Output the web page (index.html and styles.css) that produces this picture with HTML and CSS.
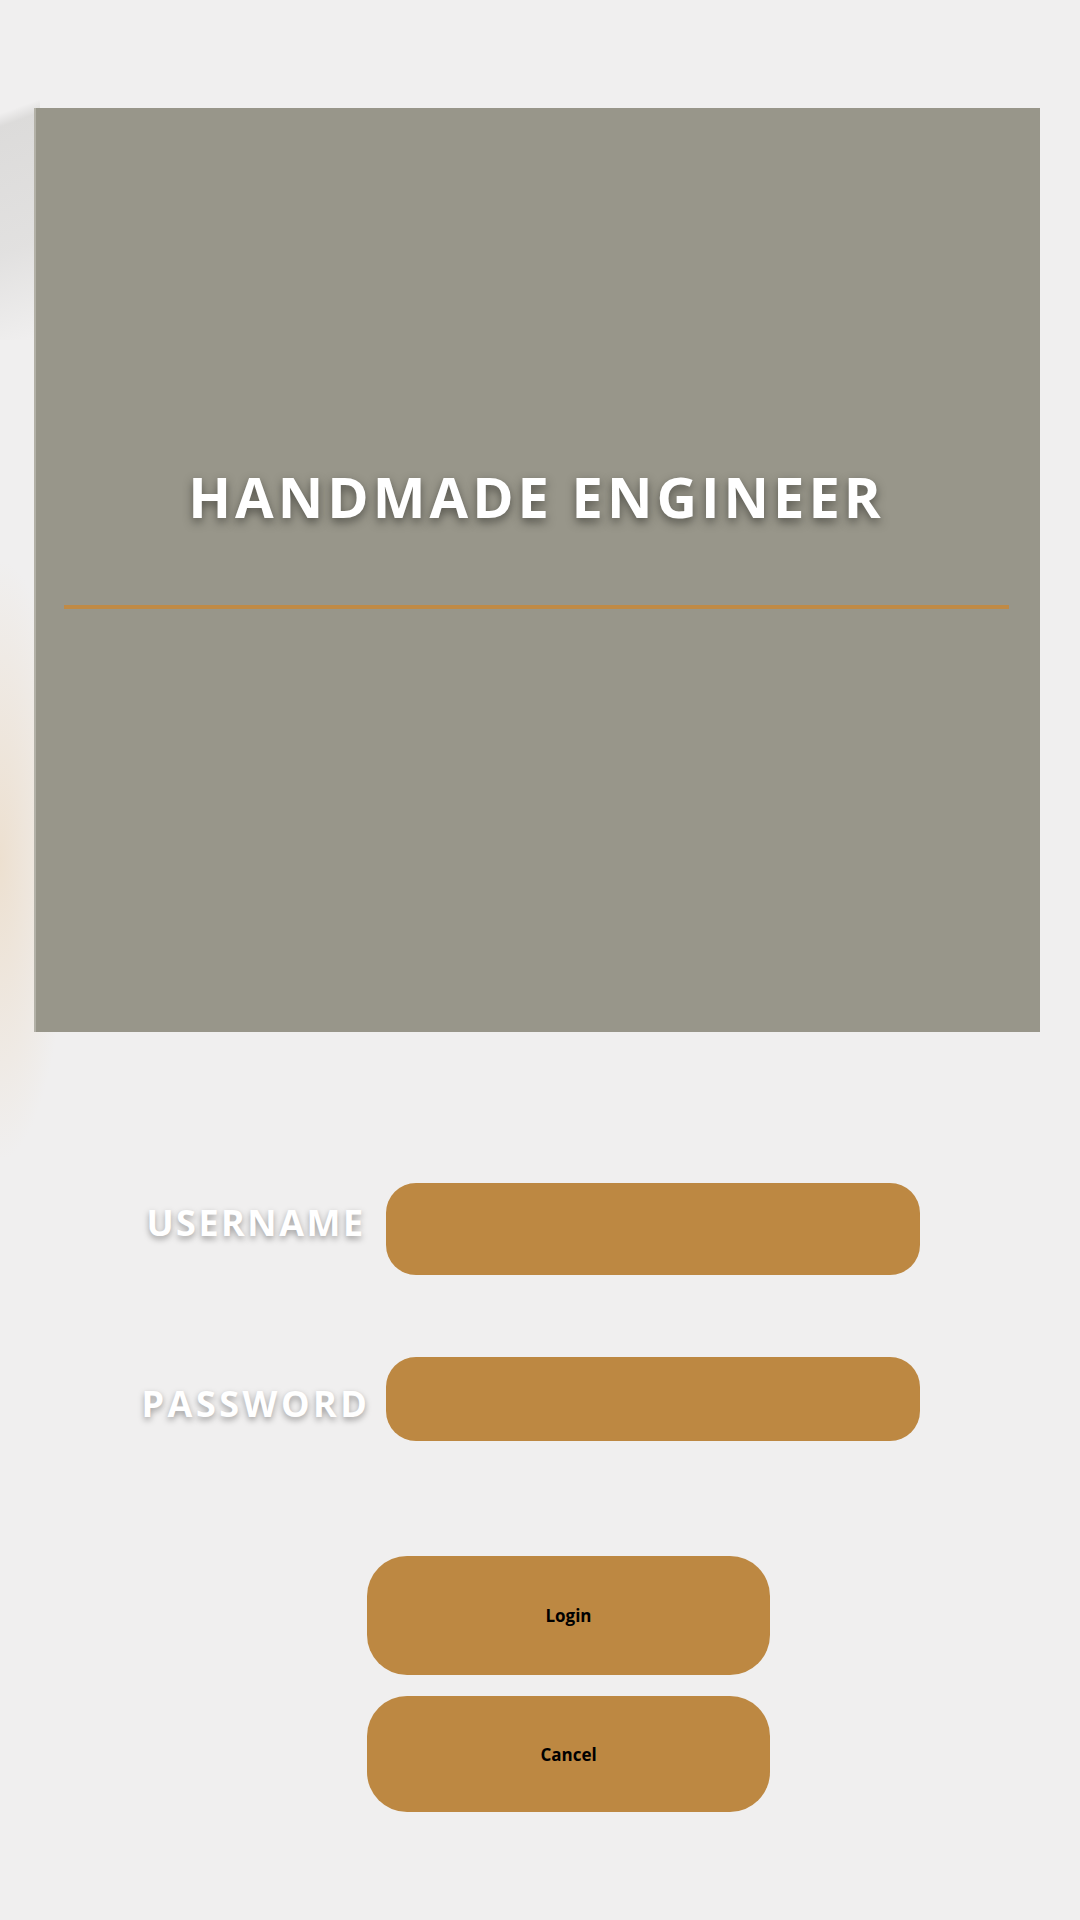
FILE: index.html
```html
<!DOCTYPE html>
<html lang="en">
<head>
    <meta charset="UTF-8">
    <meta name="viewport" content="width=device-width, initial-scale=1.0">
    <title>Handmade Engineer - Login</title>
    <link rel="stylesheet" href="styles.css">
</head>
<body>
    <div class="hero">
        <h1 class="hero-title">HANDMADE ENGINEER</h1>
        <div class="hero-rule"></div>
    </div>

    <form class="login-form">
        <div class="form-row first">
            <label for="username">USERNAME</label>
            <input type="text" id="username">
        </div>
        <div class="form-row second">
            <label for="password">PASSWORD</label>
            <input type="password" id="password">
        </div>

        <div class="actions">
            <button type="button" class="btn login">Login</button>
            <button type="button" class="btn cancel">Cancel</button>
        </div>
    </form>
</body>
</html>
```

FILE: styles.css
```css
html, body {
    margin: 0;
    padding: 0;
}
body {
    width: 1080px;
    height: 1920px;
    overflow: hidden;
    font-family: "Open Sans", "Noto Sans", Arial, sans-serif;
    background-color: #f0efef;
    background-image:
        linear-gradient(160deg, rgba(240, 239, 239, 0) 0%, rgba(240, 239, 239, 0) 28%, rgba(218, 217, 216, 0.9) 32%, rgba(222, 221, 220, 0.8) 70%, rgba(240, 239, 239, 0) 100%),
        radial-gradient(ellipse 70px 300px at 0px 860px, rgba(236, 220, 200, 0.8), rgba(240, 239, 239, 0));
    background-size: 40px 320px, 100% 100%;
    background-position: 0 20px, 0 0;
    background-repeat: no-repeat;
    padding-top: 108px;
    box-sizing: border-box;
}
.hero {
    margin-left: 34px;
    width: 1006px;
    height: 924px;
    box-sizing: border-box;
    background: #98968a;
    border-left: 2px solid #b3b1a7;
    padding: 356px 31px 0 28px;
}
.hero-title {
    margin: 0;
    text-align: center;
    color: #fff;
    font-size: 56px;
    font-weight: 700;
    line-height: 64px;
    letter-spacing: 4px;
    text-shadow: 0 4px 10px rgba(40, 40, 35, 0.6);
}
.hero-rule {
    margin-top: 77px;
    height: 4px;
    background: #c08a45;
}
.login-form {
    margin: 151px 0 0 136px;
}
.form-row {
    display: grid;
    grid-template-columns: 240px 534px;
    column-gap: 10px;
    align-items: center;
}
.form-row label {
    text-align: center;
    color: #fff;
    font-size: 36px;
    font-weight: 700;
    letter-spacing: 2.5px;
    text-shadow: 0 3px 6px rgba(0, 0, 0, 0.35);
}
.form-row input {
    border: none;
    border-radius: 30px;
    background: #bd8842;
    padding: 0 24px;
    font-size: 24px;
    outline: none;
}
.form-row.first input {
    height: 92px;
}
.form-row.first label {
    padding-bottom: 14px;
}
.form-row.second {
    margin-top: 82px;
}
.form-row.second input {
    height: 84px;
}
.form-row.second label {
    padding-top: 8px;
    letter-spacing: 3.5px;
}
.actions {
    margin: 115px 0 0 231px;
    display: flex;
    flex-direction: column;
    gap: 21px;
    width: 403px;
}
.btn {
    border: none;
    border-radius: 40px;
    background: #bd8842;
    color: #000;
    font-family: "Open Sans", "Noto Sans", Arial, sans-serif;
    font-size: 17px;
    font-weight: 700;
    cursor: pointer;
}
.btn.login {
    height: 119px;
}
.btn.cancel {
    height: 116px;
}
```
